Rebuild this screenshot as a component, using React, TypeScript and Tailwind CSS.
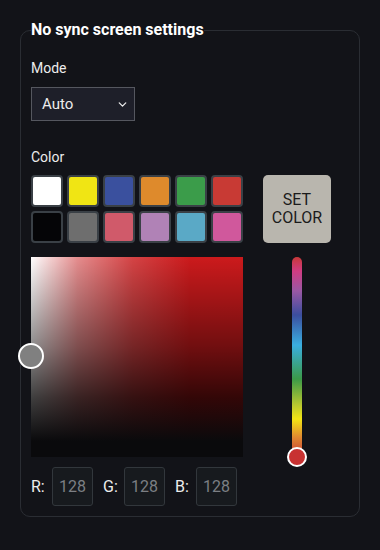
import { ChevronDown } from "lucide-react";

const swatches = [
  "#ffffff",
  "#f0e514",
  "#3a509e",
  "#de8a2c",
  "#3b9c4a",
  "#c83a34",
  "#050507",
  "#6e6e6e",
  "#d05a6a",
  "#b082b6",
  "#5aa9c6",
  "#d0589c",
];

function RgbField({ label, value }: { label: string; value: number }) {
  return (
    <div className="flex items-center">
      <span className="w-[21px] text-[16px]">{label}</span>
      <div className="flex h-[39px] w-[41px] items-center justify-center rounded-[3px] border border-[#32373c] bg-[#171a1e] text-[16px] text-[#7c7f84]">
        {value}
      </div>
    </div>
  );
}

export default function App() {
  return (
    <div
      className="min-h-[550px] w-[380px] bg-[#121318] pt-5 text-[#ececec]"
      style={{ fontFamily: "Roboto, 'Liberation Sans', sans-serif" }}
    >
      <fieldset className="ml-5 w-[340px] rounded-[10px] border border-[#2a2d33] px-[10px] pb-[10px]">
        <legend className="text-[16px] font-bold leading-5 text-white">
          No sync screen settings
        </legend>

        <p className="mt-[18px] text-[14px] leading-5">Mode</p>
        <div className="mt-[9px] flex h-[34px] w-[104px] items-center justify-between border border-[#55575f] bg-[#1e1f29] pl-[10px] pr-[5px] text-[15px]">
          <span>Auto</span>
          <ChevronDown size={13} strokeWidth={2.4} />
        </div>

        <p className="mt-[26px] text-[14px] leading-5">Color</p>
        <div className="mt-2 flex gap-5">
          <div className="grid w-[212px] grid-cols-6 gap-1">
            {swatches.map((c) => (
              <div
                key={c}
                className="h-8 w-8 rounded-[4px] border-2 border-[#3a4046]"
                style={{ backgroundColor: c }}
              />
            ))}
          </div>
          <button className="h-[68px] w-[68px] rounded-[5px] bg-[#b9b6ae] text-[16px] leading-[18px] text-[#1b1b1b]">
            SET
            <br />
            COLOR
          </button>
        </div>

        <div className="mt-[14px] flex gap-5">
          {/* saturation / value area */}
          <div className="relative h-[200px] w-[212px] bg-[#cc1a1c]">
            <div className="absolute inset-0 bg-[linear-gradient(to_right,#ffffff_0%,rgba(255,255,255,0.5)_22%,rgba(255,255,255,0.18)_48%,rgba(255,255,255,0)_75%)]" />
            <div className="absolute inset-0 bg-[linear-gradient(to_bottom,rgba(0,0,0,0)_0%,rgba(0,0,0,0.2)_20%,rgba(0,0,0,0.45)_45%,rgba(0,0,0,0.75)_70%,#0a0a0c_92%,#0a0a0c_100%)]" />
            <div className="absolute left-[-13px] top-[86px] h-[26px] w-[26px] rounded-full border-2 border-white bg-[#808080]" />
          </div>
          {/* hue slider */}
          <div className="flex w-[68px] justify-center">
            <div className="relative h-[200px] w-[10px] rounded-full bg-[linear-gradient(to_bottom,#c83838_0%,#d03c82_7%,#9a58a4_17%,#3b4e9e_29%,#3aaee0_44%,#3b9a48_61%,#b8c830_74%,#f2e414_81%,#e08a30_90%,#c83838_100%)]">
              <div className="absolute bottom-[-10px] left-1/2 h-5 w-5 -translate-x-1/2 rounded-full border-2 border-white bg-[#c83232]" />
            </div>
          </div>
        </div>

        <div className="mt-[10px] flex gap-[10px]">
          <RgbField label="R:" value={128} />
          <RgbField label="G:" value={128} />
          <RgbField label="B:" value={128} />
        </div>
      </fieldset>
    </div>
  );
}
